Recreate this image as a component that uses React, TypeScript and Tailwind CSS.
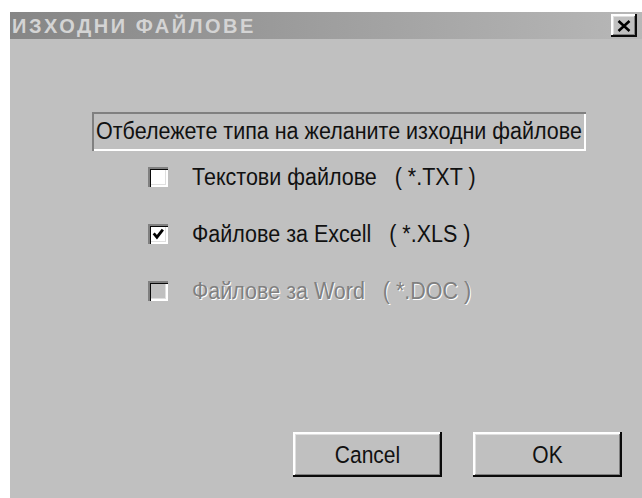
import React, { useState } from "react";

type FileOption = {
  id: string;
  label: string;
  ext: string;
  checked: boolean;
  disabled?: boolean;
};

const initialOptions: FileOption[] = [
  { id: "txt", label: "Текстови файлове", ext: "( *.TXT )", checked: false },
  { id: "xls", label: "Файлове за Excell", ext: "( *.XLS )", checked: true },
  { id: "doc", label: "Файлове за Word", ext: "( *.DOC )", checked: false, disabled: true },
];

const raised =
  "shadow-[inset_-2px_-2px_0_#0a0a0a,inset_2px_2px_0_#ffffff,inset_-3px_-3px_0_#808080,inset_3px_3px_0_#dfdfdf]";

const CheckBox = ({ checked, disabled }: { checked: boolean; disabled?: boolean }) => (
  <span
    className={`flex h-[20px] w-[20px] shrink-0 items-center justify-center shadow-[inset_2px_2px_0_#808080,inset_3px_3px_0_#0a0a0a,inset_-2px_-2px_0_#ffffff,inset_-3px_-3px_0_#dfdfdf] ${
      disabled ? "bg-[#c0c0c0]" : "bg-white"
    }`}
  >
    {checked && (
      <svg width="14" height="14" viewBox="0 0 13 13">
        <path d="M2.5 6 L5.5 9.5 L11 2.5" fill="none" stroke="#000" strokeWidth="2.6" />
      </svg>
    )}
  </span>
);

const Button = ({ children }: { children: React.ReactNode }) => (
  <button
    className={`flex h-[45px] w-[149px] items-center justify-center bg-[#c0c0c0] text-[21px] text-[#111] ${raised}`}
  >
    <span className="scale-y-[1.1]">{children}</span>
  </button>
);

export default function App() {
  const [options, setOptions] = useState(initialOptions);

  const toggle = (id: string) =>
    setOptions((prev) =>
      prev.map((o) => (o.id === id && !o.disabled ? { ...o, checked: !o.checked } : o))
    );

  return (
    <div className="h-[498px] w-[642px] overflow-hidden bg-white pl-[10px] pt-[12px] font-['Liberation_Sans',Arial,sans-serif]">
      <div className="flex h-[486px] w-[640px] flex-col bg-[#c0c0c0]">
        {/* title bar (inactive) */}
        <div className="flex h-[27px] items-center justify-between bg-linear-to-r from-[#868686] to-[#b8b8b8] pl-[2px] pr-[13px]">
          <span className="text-[20px] font-bold tracking-[2.5px] text-[#d4d4d4]">
            ИЗХОДНИ ФАЙЛОВЕ
          </span>
          <button className={`flex h-[23px] w-[26px] items-center justify-center bg-[#c0c0c0] ${raised}`}>
            <svg width="14" height="12" viewBox="0 0 14 12">
              <path d="M1.5 1 L12.5 11 M12.5 1 L1.5 11" stroke="#000" strokeWidth="2.6" />
            </svg>
          </button>
        </div>

        <div className="flex flex-1 flex-col">
          <div className="ml-[82px] mt-[73px] flex h-[39px] w-[494px] items-center pl-[4px] text-[21.5px] text-[#111] shadow-[inset_2px_2px_0_#808080,inset_-2px_-2px_0_#ffffff]">
            <span className="scale-y-[1.1]">Отбележете типа на желаните изходни файлове</span>
          </div>

          <div className="ml-[138px] mt-[16px] flex flex-col gap-[37px]">
            {options.map((o) => (
              <label
                key={o.id}
                onClick={() => toggle(o.id)}
                className="flex h-[20px] cursor-default items-center gap-[24px]"
              >
                <CheckBox checked={o.checked} disabled={o.disabled} />
                <span
                  className={`scale-y-[1.1] whitespace-pre text-[21.5px] ${
                    o.disabled ? "text-[#808080] [text-shadow:1px_1px_0_#ffffff]" : "text-[#111]"
                  }`}
                >
                  {o.label}
                  {"   "}
                  {o.ext}
                </span>
              </label>
            ))}
          </div>

          <div className="mt-auto flex justify-end gap-[31px] pb-[21px] pr-[28px]">
            <Button>Cancel</Button>
            <Button>OK</Button>
          </div>
        </div>
      </div>
    </div>
  );
}
